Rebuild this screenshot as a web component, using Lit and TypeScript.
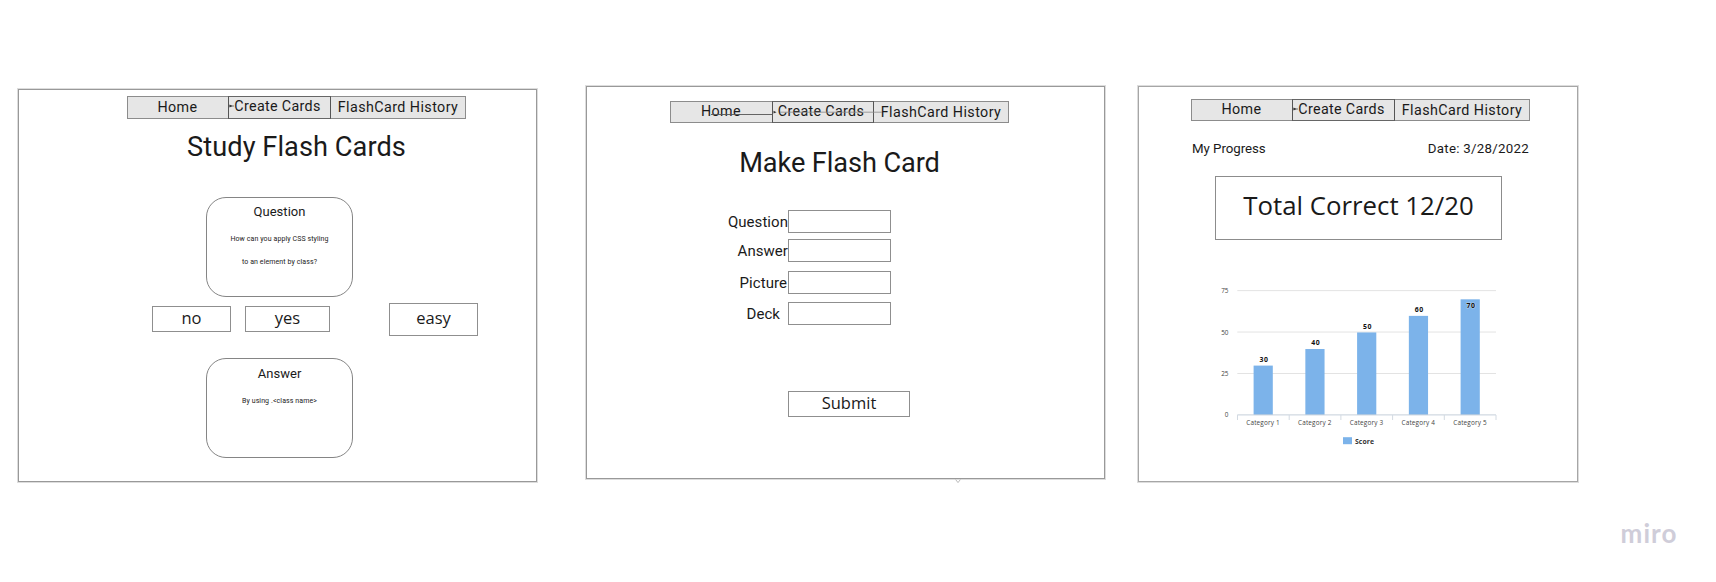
import { LitElement, html, svg, css } from "lit";
import { customElement, property } from "lit/decorators.js";

@customElement("top-nav")
class TopNav extends LitElement {
  @property({ type: Boolean }) lines = false;

  static styles = css`
    :host { display: block; position: relative; width: 339px; font: 14.3px Roboto, sans-serif; letter-spacing: 0.33px; color: #1a1a1a; }
    .bar { display: grid; grid-template-columns: var(--first, 102px) var(--second, 102px) 1fr; height: var(--bar-height, 22px); box-sizing: border-box; }
    .cell { background: #e6e6e6; border: 1px solid #8c8c8c; text-align: center; white-space: nowrap; line-height: 18px; box-sizing: border-box; }
    .home { border-right: 0; line-height: var(--home-line, 18px); padding-right: 1px; }
    .create { border-color: #666 #555; padding-right: 4px; }
    .history { border-left: 0; line-height: 20px; letter-spacing: 0.43px; }
    svg { position: absolute; inset: 0; }
  `;

  render() {
    return html`
      <div class="bar">
        <div class="cell home">Home</div>
        <div class="cell create">Create Cards</div>
        <div class="cell history">FlashCard History</div>
      </div>
      <svg width="339" height="23" fill="none">
        ${this.lines
          ? svg`<path d="M41 13.5H102" stroke="#555" stroke-width="0.9"/>
                <path d="M110 11.2H212" stroke="#888" stroke-width="0.8"/>
                <path d="M103.5 9.8L106.5 11.2L103.5 12.6Z" fill="#333"/>`
          : svg`<path d="M102 10H107" stroke="#555" stroke-width="0.8"/>
                <path d="M102.5 8.6L105.5 10L102.5 11.4Z" fill="#333"/>`}
      </svg>`;
  }
}

interface Point { label: string; value: number; x: number }

@customElement("score-chart")
class ScoreChart extends LitElement {
  static styles = css`
    :host { display: block; }
    svg { display: block; }
    text { font-family: "Open Sans", "Noto Sans", sans-serif; }
    .axis { font-size: 6.4px; fill: #444; }
    .value { font-size: 6.9px; font-weight: 700; fill: #111; text-anchor: middle; }
    .inside { stroke: #b5cfea; stroke-width: 1.2px; paint-order: stroke; }
    .end { text-anchor: end; }
    .legend { font-size: 6.8px; font-weight: 700; fill: #333; }
  `;

  private points: Point[] = [30, 40, 50, 60, 70].map((value, i) => ({
    label: `Category ${i + 1}`, value, x: 43.2 + i * 51.75,
  }));

  private y(value: number) { return 134.9 - value * 1.657; }

  render() {
    return html`<svg width="290" height="170" viewBox="0 0 290 170">
      ${[75, 50, 25].map((v) => svg`<path d="M17.3 ${this.y(v)}H276" stroke="#e3e3e3" stroke-width="1"/>`)}
      ${[0, 25, 50, 75].map((v) => svg`<text class="axis end" x="8.5" y=${this.y(v) + 2.5}>${v}</text>`)}
      ${this.points.map((p) => svg`
        <rect x=${p.x - 9.6} y=${this.y(p.value) + 0.4} width="19.2" height=${134.5 - this.y(p.value)} fill="#7cb3ea"/>
        <text class="value ${p.value === 70 ? "inside" : ""}" x=${p.x + 0.5} textLength="8.4"
          y=${this.y(p.value) + (p.value === 70 ? 9.1 : -3.5)}>${p.value}</text>
        <text class="axis" x=${p.x - 16.9} y="145.3" textLength="33.3">${p.label}</text>`)}
      <path d="M17.3 134.9H276" stroke="#c5cfda" stroke-width="1" fill="none"/>
      ${[0, 1, 2, 3, 4, 5].map((i) => svg`<path d="M${17.5 + i * 51.7} 135V140" stroke="#d3dae2" stroke-width="1"/>`)}
      <rect x="123" y="157.2" width="9" height="7" fill="#7cb3ea"/>
      <text class="legend" x="135" y="163.6" textLength="19">Score</text>
    </svg>`;
  }
}

@customElement("app-root")
class AppRoot extends LitElement {
  static styles = css`
    :host { display: block; width: 1716px; height: 582px; background: #fff; color: #1a1a1a; font-family: Roboto, sans-serif; overflow: hidden; }
    .board { display: flex; align-items: flex-start; height: 510px; box-sizing: border-box; padding: 86px 0 0 18px; }
    .frame { box-sizing: border-box; border: 1px solid #999; outline: 0.5px solid #ddd; flex: none; position: relative; }
    .study { width: 519px; height: 393px; margin-top: 3px; }
    .make { width: 519px; height: 393px; margin-left: 49px; }
    .progress { width: 440px; height: 396px; margin-left: 33px; border-color: #a6a6a6; }
    .study top-nav { margin: 6px 0 0 108px; --home-line: 20px; --first: 101px; --second: 103px; --bar-height: 23px; }
    .make top-nav { margin: 14px 0 0 83px; }
    .progress top-nav { margin: 12px 0 0 52px; --first: 101px; --second: 103px; }
    h1 { margin: 0; font-size: 27.2px; line-height: 32px; font-weight: 400; white-space: nowrap; text-align: center; }
    .study h1 { margin: 12px 0 0 108px; width: 339px; letter-spacing: 0.05px; }
    .make h1 { margin: 24px 0 0 83px; width: 339px; letter-spacing: -0.1px; }
    .card { box-sizing: border-box; width: 147px; height: 100px; margin-left: 187px; border: 1px solid #858585; border-radius: 20px; text-align: center; padding-top: 6px; }
    .card.q { margin-top: 34px; }
    .card.a { margin-top: 22px; padding-top: 7px; }
    .card h2 { margin: 0; font-size: 13px; line-height: 16px; font-weight: 400; letter-spacing: 0.05px; }
    .card p { margin: 0; font-size: 7px; line-height: 23px; letter-spacing: 0.1px; color: #222; }
    .card .first { margin-top: 8px; }
    .buttons { display: flex; align-items: flex-start; margin: 6px 0 0 133px; height: 33px; }
    .btn { box-sizing: border-box; border: 1px solid #8f8f8f; font: 16.5px/22px "Open Sans", "Noto Sans", sans-serif; text-align: center; }
    .no { width: 79px; height: 26px; margin-top: 3px; }
    .yes { width: 85px; height: 26px; margin: 3px 0 0 14px; }
    .easy { width: 89px; height: 33px; margin-left: 59px; padding-top: 3px; }
    .form { display: grid; grid-template-columns: 61px 103px; grid-template-rows: 29px 32px 31px 23px; margin: 31px 0 0 140px; }
    .label { font-size: 15px; line-height: 24px; text-align: right; white-space: nowrap; letter-spacing: 0.05px; }
    .pic { padding-right: 1px; }
    .field { box-sizing: border-box; height: 23px; border: 1px solid #8f8f8f; }
    .deck { padding-right: 8px; }
    .submit { width: 122px; height: 26px; margin: 66px 0 0 201px; }
    .meta { display: flex; justify-content: space-between; margin: 19px 48px 0 53px; font-size: 13.3px; line-height: 18px; }
    .date { letter-spacing: 0.27px; }
    .mine { letter-spacing: -0.05px; }
    .total { box-sizing: border-box; width: 287px; height: 64px; margin: 18px 0 0 76px; border: 1px solid #8c8c8c; text-align: center; font: 25.8px/56px "Open Sans", "Noto Sans", sans-serif; }
    score-chart { margin: 40px 0 0 81px; }
    .handle { position: absolute; left: 367px; top: 391px; }
    .brand { display: flex; justify-content: flex-end; padding-right: 38px; }
    .brand text { font: 700 26px Lato, sans-serif; fill: #cfcdd9; }
  `;

  render() {
    return html`
      <main class="board">
        <section class="frame study">
          <top-nav></top-nav>
          <h1>Study Flash Cards</h1>
          <div class="card q">
            <h2>Question</h2>
            <p class="first">How can you apply CSS styling</p>
            <p>to an element by class?</p>
          </div>
          <div class="buttons">
            <div class="btn no">no</div>
            <div class="btn yes">yes</div>
            <div class="btn easy">easy</div>
          </div>
          <div class="card a">
            <h2>Answer</h2>
            <p class="first">By using .&lt;class name&gt;</p>
          </div>
        </section>
        <section class="frame make">
          <top-nav lines></top-nav>
          <h1>Make Flash Card</h1>
          <div class="form">
            <div class="label">Question</div><div class="field"></div>
            <div class="label">Answer</div><div class="field"></div>
            <div class="label pic">Picture</div><div class="field"></div>
            <div class="label deck">Deck</div><div class="field"></div>
          </div>
          <div class="btn submit">Submit</div>
          <svg class="handle" width="8" height="6" fill="none"><path d="M1.6 1.5L4 4.6L6.4 1.5" stroke="#bbb"/></svg>
        </section>
        <section class="frame progress">
          <top-nav></top-nav>
          <div class="meta"><span class="mine">My Progress</span><span class="date">Date: 3/28/2022</span></div>
          <div class="total">Total Correct 12/20</div>
          <score-chart></score-chart>
        </section>
      </main>
      <footer class="brand">
        <svg width="60" height="48"><text x="2.5" y="33" textLength="56">miro</text></svg>
      </footer>`;
  }
}
